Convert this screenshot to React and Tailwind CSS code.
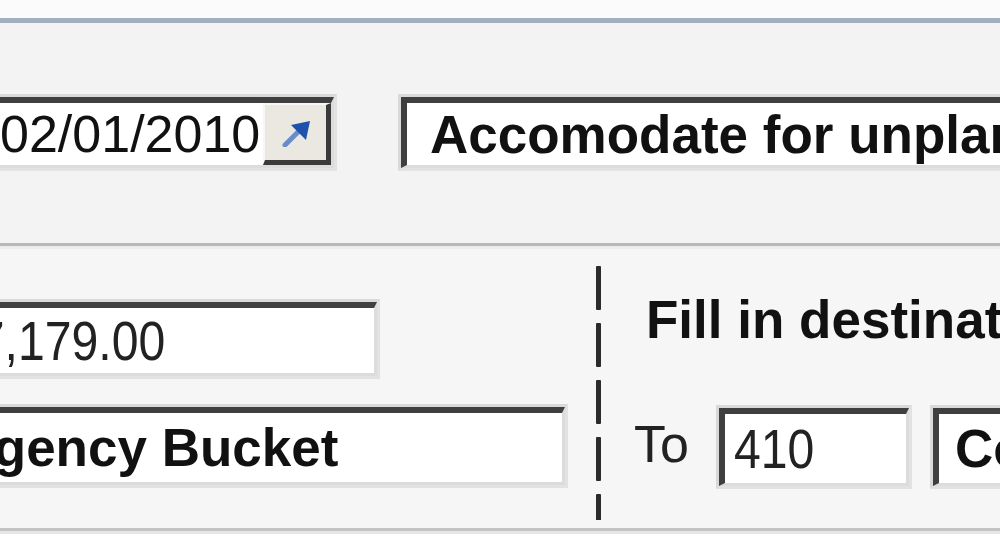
function Field({ className = "", innerClass = "", children }) {
  return (
    <div
      className={`shrink-0 border-[3px] border-t-[#d9d9d9] border-l-[#d9d9d9] border-r-[#e2e2e2] border-b-[#e2e2e2] ${className}`}
    >
      <div
        className={`h-full flex items-center overflow-hidden whitespace-nowrap bg-white border-t-[6px] border-l-[6px] border-r-[3px] border-b-[3px] border-t-[#3f3f3f] border-l-[#3f3f3f] border-r-[#dcdcdc] border-b-[#dcdcdc] ${innerClass}`}
      >
        {children}
      </div>
    </div>
  );
}

function ShortcutArrow() {
  return (
    <svg width="30" height="28" viewBox="0 0 30 28">
      <line x1="4" y1="26" x2="17" y2="13" stroke="#6a8cc8" strokeWidth="5" strokeLinecap="round" />
      <polygon points="29,2 25,21 10,6" fill="#1f52ad" />
    </svg>
  );
}

function Dashes() {
  const dashes = [0, 1, 2, 3, 4];
  return (
    <div className="w-[6px] shrink-0 pt-[17px] flex flex-col gap-[13px] overflow-hidden h-[271px]">
      {dashes.map((i) => (
        <div key={i} className="w-[5px] h-[44px] shrink-0 bg-[#2b2b2b] rounded-[1px]" />
      ))}
    </div>
  );
}

export default function App() {
  return (
    <div className="w-[1000px] h-[556px] overflow-hidden bg-white font-['Liberation_Sans',Arial,sans-serif] text-[#111]">
      <div className="h-[18px] bg-[#fbfbfb]" />
      <div className="h-[5px] bg-[#a2afbf]" />

      {/* upper row: date + description */}
      <div className="h-[220px] bg-[#f3f3f3] pt-[71px] flex items-start">
        <Field className="ml-[-30px] w-[367px] h-[77px]" innerClass="pl-[21px]">
          <span className="text-[52px] leading-none">02/01/2010</span>
          <button className="ml-auto self-stretch w-[68px] flex items-center justify-center bg-[#ebe8e2] border-t-2 border-l-2 border-t-[#f7f7f7] border-l-[#f7f7f7] border-r-[5px] border-b-[5px] border-r-[#3a3a3a] border-b-[#3a3a3a]">
            <ShortcutArrow />
          </button>
        </Field>
        <Field className="ml-[61px] w-[640px] h-[77px]" innerClass="pl-[23px]">
          <span className="text-[53px] leading-none font-bold">Accomodate for unplanned expenses</span>
        </Field>
      </div>

      <div className="h-[6px] border-t-[3px] border-t-[#b8b8b8] bg-[#ececec]" />

      {/* lower panel */}
      <div className="h-[279px] bg-[#f6f6f6] flex">
        <div className="w-[596px] shrink-0 pt-[50px] flex flex-col gap-[25px]">
          <Field className="ml-[-64px] w-[444px] h-[80px]" innerClass="pl-[6px]">
            <span className="inline-block origin-left scale-x-[0.86] text-[56px] leading-none text-[#222]">$7,179.00</span>
          </Field>
          <Field className="ml-[-191px] w-[759px] h-[84px]" innerClass="pl-[8px]">
            <span className="text-[53px] leading-none font-bold">Contingency Bucket</span>
          </Field>
        </div>

        <Dashes />

        <div className="pl-[32px] pt-[44px] flex flex-col">
          <div className="ml-[12px] text-[53px] leading-none font-bold whitespace-nowrap">
            Fill in destination account
          </div>
          <div className="mt-[59px] flex items-center">
            <span className="mb-[6px] text-[52px] leading-none text-[#222]">To</span>
            <Field className="ml-[27px] w-[196px] h-[84px]" innerClass="pl-[9px]">
              <span className="inline-block origin-left scale-x-[0.86] text-[56px] leading-none text-[#222]">410</span>
            </Field>
            <Field className="ml-[18px] w-[220px] h-[84px]" innerClass="pl-[16px]">
              <span className="text-[53px] leading-none font-bold">Contingency Bucket</span>
            </Field>
          </div>
        </div>
      </div>

      <div className="h-[6px] border-t-[3px] border-t-[#c4c4c4] bg-[#e6e6e6]" />
      <div className="h-[22px] bg-white" />
    </div>
  );
}
